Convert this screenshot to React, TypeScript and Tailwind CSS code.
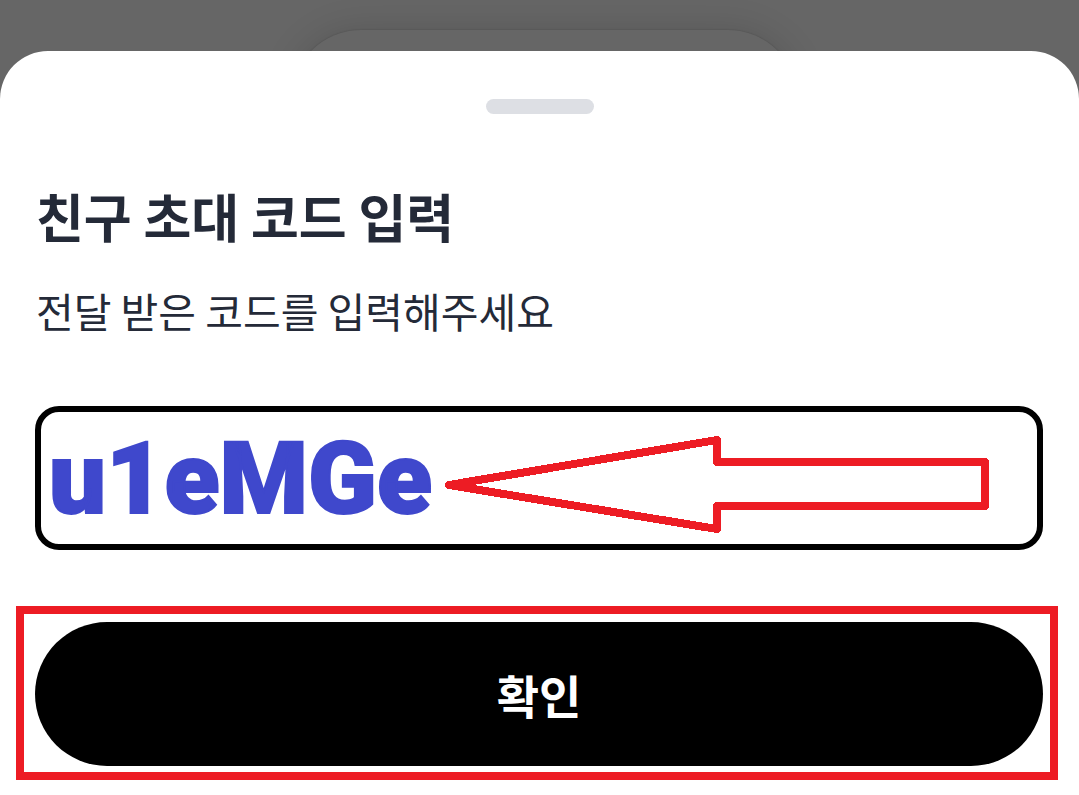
import { useState } from 'react';

const CodeArrow = () => (
  <svg
    className="pointer-events-none absolute top-[29px] right-[53px] h-[98px] w-[546px]"
    viewBox="0 0 546 98"
    fill="none"
    stroke="#ed1c24"
    strokeWidth="8"
    strokeLinejoin="round"
    shapeRendering="crispEdges"
    aria-hidden="true"
  >
    <path d="M5 50 L273 5 V27 H541 V71 H273 V94 Z" />
  </svg>
);

const App = () => {
  const [code, setCode] = useState('u1eMGe');

  return (
    <div className="relative flex min-h-screen flex-col overflow-hidden bg-[#666666] pt-[51px] font-['Noto_Sans_CJK_KR',sans-serif]">
      {/* dimmed card behind the sheet */}
      <div className="absolute top-[30px] left-[27%] h-40 w-[47%] rounded-[70px] bg-[#666666] shadow-[0_0_36px_rgba(0,0,0,0.14),0_0_2px_rgba(0,0,0,0.2)]" />

      <main className="relative flex-1 rounded-t-[48px] bg-white pt-12 pb-[15px]">
        <div className="mx-auto h-[15px] w-[108px] rounded-full bg-[#dddfe4]" />

        <form onSubmit={(e) => e.preventDefault()}>
          <div className="mt-[66px] px-9 text-[#242a38]">
            <h1 className="text-[52px] leading-[72px] font-bold">친구 초대 코드 입력</h1>
            <label htmlFor="code" className="mt-7 block text-[41px] leading-[60px]">
              전달 받은 코드를 입력해주세요
            </label>
          </div>

          <div className="relative mt-[66px] mr-9 ml-[35px]">
            <input
              id="code"
              type="text"
              value={code}
              onChange={(e) => setCode(e.target.value)}
              className="block h-36 w-full rounded-3xl border-[6px] border-black bg-white px-2 font-['Roboto',sans-serif] text-[101px] leading-none font-black text-[#3f48cc] outline-none [-webkit-text-stroke:2px_#3f48cc]"
            />
            <CodeArrow />
          </div>

          <div className="mt-14 mr-[21px] ml-4 border-8 border-[#ed1c24] pt-2 pr-[7px] pb-[6px] pl-[11px]">
            <button
              type="submit"
              className="block h-36 w-full rounded-full bg-black text-[46px] leading-none font-bold text-white"
            >
              확인
            </button>
          </div>
        </form>
      </main>
    </div>
  );
};

export default App;
